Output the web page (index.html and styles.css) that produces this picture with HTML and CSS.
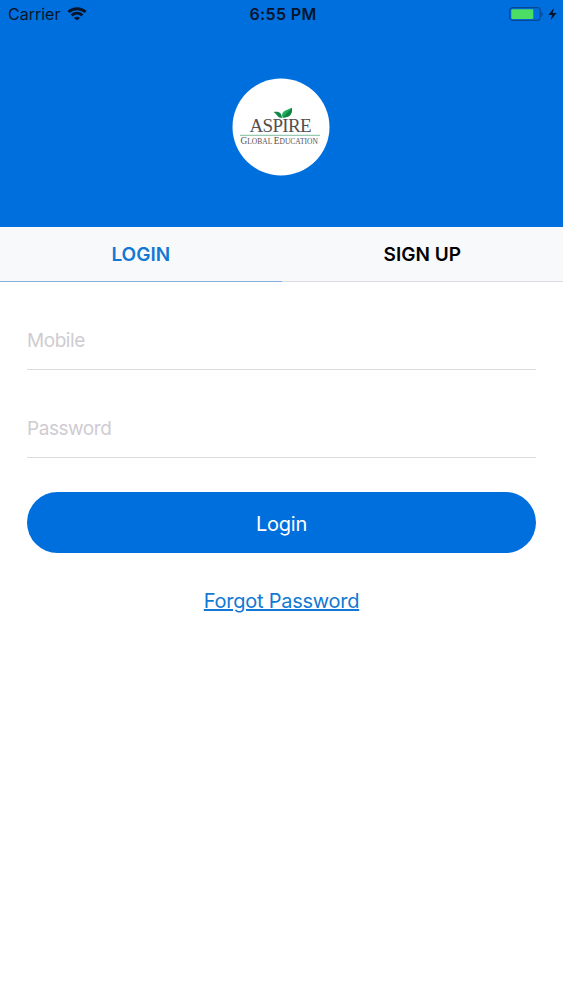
FILE: index.html
```html
<!DOCTYPE html>
<html lang="en">
<head>
  <meta charset="UTF-8">
  <meta name="viewport" content="width=device-width, initial-scale=1.0">
  <title>Aspire Global Education - Login</title>
  <link rel="stylesheet" href="styles.css">
</head>
<body>
  <header>
    <div class="status-bar">
      <div class="carrier">
        <span class="carrier-name">Carrier</span>
        <svg class="wifi" width="20" height="14" viewBox="0 0 20 14" fill="none" stroke="#06152b" stroke-width="2.9">
          <path d="M1.4 5C6.4 0.6 13.6 0.6 18.6 5"/>
          <path d="M4.6 8.4C7.8 5.6 12.2 5.6 15.4 8.4"/>
          <path d="M10 13.6L7 10.9C8.7 9.5 11.3 9.5 13 10.9Z" fill="#06152b" stroke="none"/>
        </svg>
      </div>
      <span class="time">6:55 PM</span>
      <svg class="battery" width="48" height="16" viewBox="0 0 48 16">
        <rect x="-0.3" y="1.7" width="30.6" height="12.6" rx="3" fill="none" stroke="#064893" stroke-width="1.2"/>
        <rect x="1.3" y="3.3" width="22" height="9.6" rx="1.2" fill="#4cde64"/>
        <path d="M31.4 5.8c1.8.8 1.8 3.8 0 4.6z" fill="#064893"/>
        <path d="M44 1.8L38.4 9h3.7l-1.6 5.2L46.6 7h-3.9z" fill="#06152b"/>
      </svg>
    </div>
    <svg class="logo" width="98" height="98" viewBox="0 0 98 98">
      <circle cx="49" cy="49" r="48.5" fill="#fff"/>
      <text class="logo-name" x="17.5" y="54.3" textLength="62" lengthAdjust="spacing">ASPIRE</text>
      <path d="M50.5 39.5C48.5 34 53 32.5 60 29.8C60.5 36.5 57.5 40 50.5 39.5Z" fill="#1fae55"/>
      <path d="M50.5 39.5L60 29.8C60.5 36.5 57.5 40 50.5 39.5Z" fill="#128444"/>
      <path d="M50 40C45.5 40 45.5 36.5 41.5 34C47 33.3 49.8 35 50 40Z" fill="#12874a"/>
      <path d="M8 57.3H88" stroke="#7dbca0" stroke-width="1"/>
      <text class="logo-sub" x="8.5" y="66"><tspan class="cap">G</tspan>LOBAL <tspan class="cap">E</tspan>DUCATION</text>
    </svg>
  </header>

  <nav class="tabs">
    <a class="tab active">LOGIN</a>
    <a class="tab">SIGN UP</a>
  </nav>

  <form class="login-form">
    <input type="text" id="mobile" placeholder="Mobile">
    <input type="password" id="password" placeholder="Password">
    <button type="button">Login</button>
    <a class="forgot">Forgot Password</a>
  </form>
</body>
</html>
```

FILE: styles.css
```css
* {
  box-sizing: border-box;
}

body {
  margin: 0;
  background: #fff;
  color: #000;
  font-family: Inter, "Liberation Sans", sans-serif;
}

header {
  display: flex;
  flex-direction: column;
  align-items: center;
  height: 227px;
  background: #006fde;
}

.status-bar {
  display: grid;
  grid-template-columns: 1fr auto 1fr;
  align-items: center;
  width: 100%;
  height: 28px;
  padding: 0 5px 0 8px;
  color: #06152b;
  font-size: 16px;
}

.carrier {
  display: flex;
  align-items: center;
  gap: 7px;
}

.time {
  font-weight: 600;
  letter-spacing: 0.35px;
}

.battery {
  justify-self: end;
  overflow: visible;
}

.logo {
  margin: 50px 1px 0 0;
}

.logo-name {
  fill: #55504f;
  font-family: "Liberation Serif", serif;
  font-size: 19px;
}

.logo-sub {
  fill: #55504f;
  font-family: "Liberation Serif", serif;
  font-size: 7.5px;
}

.logo-sub .cap {
  font-size: 9.3px;
}

.tabs {
  display: flex;
  height: 55px;
  background: #f8f9fa;
}

.tab {
  flex: 1;
  border-bottom: 1px solid #d9dbe1;
  font-size: 19px;
  font-weight: 600;
  line-height: 56px;
  text-align: center;
}

.tab.active {
  border-color: #85b0df;
  color: #1278d4;
}

.login-form {
  display: flex;
  flex-direction: column;
  padding: 28px 27px 0;
}

input {
  height: 60px;
  margin-bottom: 28px;
  padding: 1px 0 0;
  border: none;
  border-bottom: 1px solid #dcdadd;
  background: none;
  font-family: inherit;
  font-size: 19px;
  letter-spacing: -0.45px;
  outline: none;
}

input::placeholder {
  color: #cfccd1;
}

button {
  height: 61px;
  margin-top: 6px;
  padding-top: 3px;
  border: none;
  border-radius: 31px;
  background: #006fde;
  color: #fff;
  font-family: inherit;
  font-size: 20px;
  letter-spacing: -0.25px;
}

.forgot {
  align-self: center;
  margin-top: 36px;
  color: #1278d4;
  font-size: 20px;
  letter-spacing: -0.25px;
  line-height: 25px;
  text-decoration: underline;
}
```
